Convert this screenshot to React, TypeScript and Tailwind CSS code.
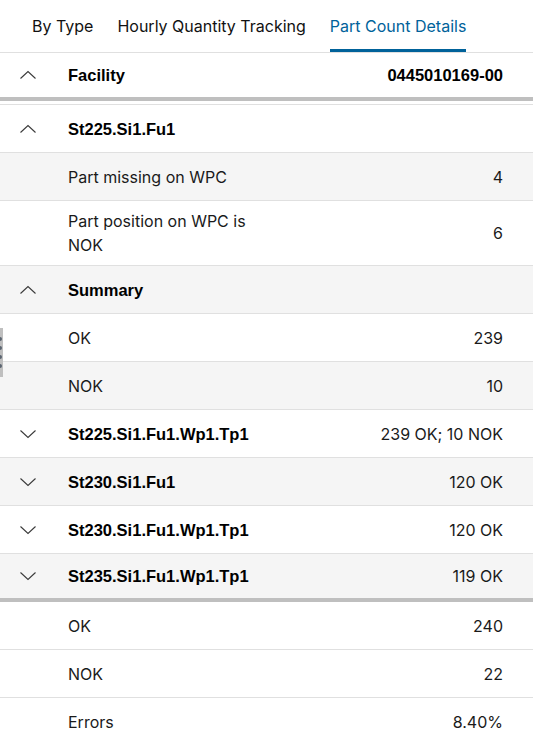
import React from 'react';

type Row = {
  label: string;
  value?: string;
  kind: 'group' | 'item';
  open?: boolean;
  shaded?: boolean;
  tall?: boolean;
  last?: boolean;
};

const rows: Row[] = [
  { label: 'St225.Si1.Fu1', kind: 'group', open: true },
  { label: 'Part missing on WPC', value: '4', kind: 'item', shaded: true },
  { label: 'Part position on WPC is NOK', value: '6', kind: 'item', tall: true },
  { label: 'Summary', kind: 'group', open: true, shaded: true },
  { label: 'OK', value: '239', kind: 'item' },
  { label: 'NOK', value: '10', kind: 'item', shaded: true },
  { label: 'St225.Si1.Fu1.Wp1.Tp1', value: '239 OK; 10 NOK', kind: 'group' },
  { label: 'St230.Si1.Fu1', value: '120 OK', kind: 'group', shaded: true },
  { label: 'St230.Si1.Fu1.Wp1.Tp1', value: '120 OK', kind: 'group' },
  { label: 'St235.Si1.Fu1.Wp1.Tp1', value: '119 OK', kind: 'group', shaded: true, last: true },
];

const totals = [
  { label: 'OK', value: '240' },
  { label: 'NOK', value: '22' },
  { label: 'Errors', value: '8.40%' },
];

const Chevron: React.FC<{ open?: boolean }> = ({ open }) => (
  <svg width="16" height="16" viewBox="0 0 16 16" className="text-[#3a3a3a]">
    {open ? (
      <polyline points="0.5,11.5 8,4.5 15.5,11.5" fill="none" stroke="currentColor" strokeWidth="1.1" />
    ) : (
      <polyline points="0.5,4.5 8,11.5 15.5,4.5" fill="none" stroke="currentColor" strokeWidth="1.1" />
    )}
  </svg>
);

const regular = "font-['Inter',sans-serif] text-[16px]";
const bold = "font-['Liberation_Sans',Arial,sans-serif] font-bold text-[16.5px]";

const TableRow: React.FC<{ row: Row }> = ({ row }) => {
  const isGroup = row.kind === 'group';
  const height = row.tall ? 'h-[65px] border-b' : row.last ? 'h-[44px]' : 'h-[48px] border-b';
  return (
    <div className={`flex items-center border-[#e0e0e0] ${height} ${row.shaded ? 'bg-[#f5f5f5]' : 'bg-white'}`}>
      <div className="w-[68px] pl-5 flex items-center">{isGroup && <Chevron open={row.open} />}</div>
      <div className={`${isGroup ? bold + ' text-black' : regular + ' text-[#1a1a1a] w-[205px]'} leading-6`}>
        {row.label}
      </div>
      <div className={`ml-auto pr-[30px] text-[#1a1a1a] ${regular}`}>{row.value}</div>
    </div>
  );
};

export default function App() {
  return (
    <div className="relative w-[533px] h-[745px] overflow-hidden bg-white">
      {/* tabs */}
      <div className="flex h-[53px] pl-5 border-b border-[#e0e0e0]">
        {['By Type', 'Hourly Quantity Tracking', 'Part Count Details'].map((t, i) => (
          <div key={t} className="px-3 flex flex-col">
            <div className={`flex-1 flex items-center pt-[3px] ${regular} ${i === 2 ? 'text-[#00629a]' : 'text-[#111]'}`}>
              {t}
            </div>
            <div className={`h-[3px] ${i === 2 ? 'bg-[#00629a]' : ''}`} />
          </div>
        ))}
      </div>

      {/* facility header */}
      <div className="flex items-center h-[48px] border-b-4 border-[#bfbfbf]">
        <div className="w-[68px] pl-5 flex items-center">
          <Chevron open />
        </div>
        <div className={`${bold} text-black`}>Facility</div>
        <div className={`ml-auto pr-[30px] ${bold} text-black`}>0445010169-00</div>
      </div>
      <div className="h-[4px] border-b border-[#e0e0e0]" />

      {rows.map((r) => (
        <TableRow key={r.label + (r.value ?? '')} row={r} />
      ))}

      {/* totals */}
      <div className="border-t-4 border-[#bfbfbf]">
        {totals.map((t, i) => (
          <div
            key={t.label}
            className={`flex items-center h-[48px] ${i < totals.length - 1 ? 'border-b border-[#e0e0e0]' : ''}`}
          >
            <div className="w-[68px]" />
            <div className={`${regular} text-[#1a1a1a]`}>{t.label}</div>
            <div className={`ml-auto pr-[30px] ${regular} text-[#1a1a1a]`}>{t.value}</div>
          </div>
        ))}
      </div>

      {/* side drag handle */}
      <div className="absolute left-0 top-[328px] w-[3px] h-[49px] bg-[#bfbfbf] flex flex-col items-start justify-center gap-[5px]">
        {[0, 1, 2, 3].map((d) => (
          <div key={d} className="w-[4px] h-[4px] rounded-full bg-[#5a6470] -ml-[2px]" />
        ))}
      </div>
    </div>
  );
}
